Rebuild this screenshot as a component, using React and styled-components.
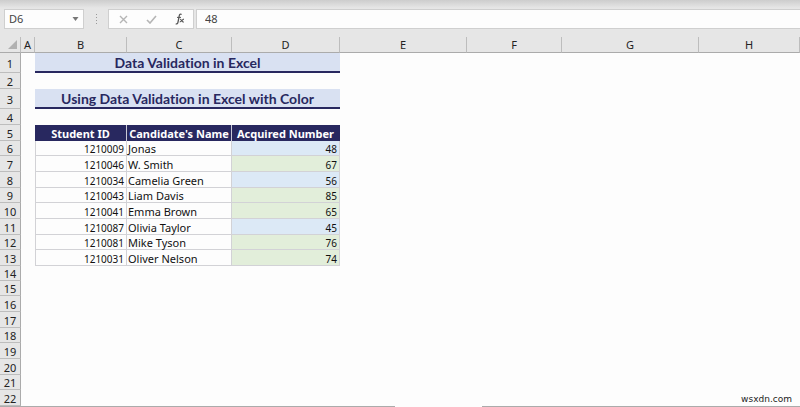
import React from "react";
import styled, { createGlobalStyle } from "styled-components";

const columns = [
  { name: "A", width: 14 },
  { name: "B", width: 92 },
  { name: "C", width: 105 },
  { name: "D", width: 108 },
  { name: "E", width: 127 },
  { name: "F", width: 95 },
  { name: "G", width: 137 },
  { name: "H" }
];

const students = [
  { id: 1210009, name: "Jonas", score: 48 },
  { id: 1210046, name: "W. Smith", score: 67 },
  { id: 1210034, name: "Camelia Green", score: 56 },
  { id: 1210043, name: "Liam Davis", score: 85 },
  { id: 1210041, name: "Emma Brown", score: 65 },
  { id: 1210087, name: "Olivia Taylor", score: 45 },
  { id: 1210081, name: "Mike Tyson", score: 76 },
  { id: 1210031, name: "Oliver Nelson", score: 74 }
];

const FIRST_STUDENT_ROW = 6;
const LAST_ROW = 22;
const PASS_MARK = 60;

const titles = {
  1: "Data Validation in Excel",
  3: "Using Data Validation in Excel with Color"
};

const shortRows = [6, 9, 12, 14, 15, 18, 21];

class App extends React.Component {
  constructor(props) {
    super(props);
    this.state = {
      cell: "D6",
      formula: "48"
    };
  }

  handleInputChange = event => {
    this.setState({ [event.target.name]: event.target.value });
  };

  renderCells(row) {
    if (titles[row]) {
      return <TitleCell colSpan={3}>{titles[row]}</TitleCell>;
    }
    if (row === FIRST_STUDENT_ROW - 1) {
      return (
        <>
          <HeadCell>Student ID</HeadCell>
          <HeadCell>Candidate's Name</HeadCell>
          <HeadCell $last>Acquired Number</HeadCell>
        </>
      );
    }
    const student = students[row - FIRST_STUDENT_ROW];
    if (student) {
      return (
        <>
          <NumberCell $first>{student.id}</NumberCell>
          <DataCell>{student.name}</DataCell>
          <NumberCell $fill={student.score >= PASS_MARK ? "#e2eeda" : "#dce9f6"}>
            {student.score}
          </NumberCell>
        </>
      );
    }
    return <EmptyCell colSpan={3} />;
  }

  render() {
    const rows = Array.from({ length: LAST_ROW }, (_, i) => i + 1);

    return (
      <Page>
        <GlobalStyle />
        <FormulaBar>
          <NameBox>
            <BarInput
              type="text"
              name="cell"
              aria-label="Name box"
              value={this.state.cell}
              onChange={this.handleInputChange}
            />
            <IconButton aria-label="Open name list">
              <svg width="7" height="4" viewBox="0 0 7 4">
                <path d="M0.5 0h6l-3 4z" fill="#777" />
              </svg>
            </IconButton>
          </NameBox>
          <Grip>
            <svg width="3" height="10" viewBox="0 0 3 10" fill="#999">
              <path d="M1 0h1v1h-1zM1 3h1v1h-1zM1 6h1v1h-1zM1 9h1v1h-1z" />
            </svg>
          </Grip>
          <Actions>
            <IconButton aria-label="Cancel">
              <svg width="9" height="9" viewBox="0 0 9 9">
                <path d="M1 1l7 7M8 1l-7 7" stroke="#b5b5b5" strokeWidth="1.4" />
              </svg>
            </IconButton>
            <IconButton aria-label="Enter">
              <svg width="11" height="9" viewBox="0 0 11 9">
                <path d="M1 5l3 3l6-7" fill="none" stroke="#b5b5b5" strokeWidth="1.6" />
              </svg>
            </IconButton>
            <IconButton aria-label="Insert function">
              <svg width="10" height="12" viewBox="0 0 10 12" fill="none" stroke="#555">
                <path d="M6.6 1.6C5.4 0.5 4.5 1.3 4.2 3L3 9.2C2.7 10.9 1.8 11.3 0.7 10.7" strokeWidth="1.3" />
                <path d="M2 4.4h4" strokeWidth="1" />
                <path d="M5 6.2c1.6-0.4 1.7 3.4 3.9 2.8M8.9 6.1C7.4 6.3 6.4 9 4.7 9" strokeWidth="1.1" />
              </svg>
            </IconButton>
          </Actions>
          <FormulaBox>
            <BarInput
              type="text"
              name="formula"
              aria-label="Formula"
              value={this.state.formula}
              onChange={this.handleInputChange}
            />
          </FormulaBox>
        </FormulaBar>
        <Sheet>
          <colgroup>
            <Column $width={21} />
            {columns.map(column => (
              <Column key={column.name} $width={column.width} />
            ))}
          </colgroup>
          <thead>
            <tr>
              <Corner>
                <svg width="9" height="9" viewBox="0 0 9 9">
                  <path d="M9 0v9h-9z" fill="#b1b1b1" />
                </svg>
              </Corner>
              {columns.map(column => (
                <ColumnHead key={column.name} scope="col">{column.name}</ColumnHead>
              ))}
            </tr>
          </thead>
          <tbody>
            {rows.map(row => (
              <Row key={row} $height={titles[row] ? 20 : shortRows.includes(row) ? 15 : 16}>
                <RowHead scope="row">{row}</RowHead>
                <EmptyCell />
                {this.renderCells(row)}
                <EmptyCell colSpan={4} />
              </Row>
            ))}
          </tbody>
        </Sheet>
        <SheetEdge>
          <ActiveTab />
        </SheetEdge>
        <SiteName>wsxdn.com</SiteName>
      </Page>
    );
  }
}

const GlobalStyle = createGlobalStyle`
  * {
    box-sizing: border-box;
  }
  body {
    margin: 0;
    background: #fdfdfd;
    color: #222;
    font-family: "Noto Sans", "Open Sans", sans-serif;
    font-size: 11px;
    line-height: 12px;
  }
`;

const Page = styled.div`
  position: relative;
  overflow: hidden;
`;

const FormulaBar = styled.div`
  display: flex;
  height: 37px;
  padding: 9px 0 8px 4px;
  background: linear-gradient(#cdcdcd, #e6e6e6 8px);
`;

const BarBox = styled.div`
  display: flex;
  align-items: center;
  background: #fdfdfd;
  border: 1px solid #cfcfcf;
`;

const NameBox = styled(BarBox)`
  width: 80px;
  padding: 0 4px;
`;

const Grip = styled.div`
  display: flex;
  align-items: center;
  justify-content: center;
  width: 24px;
`;

const Actions = styled(BarBox)`
  width: 86px;
  margin-right: 2px;
  justify-content: space-between;
  padding: 0 8px 0 10px;
`;

const FormulaBox = styled(BarBox)`
  flex: 1;
  padding: 0 8px;
  border-right: none;
`;

const BarInput = styled.input`
  flex: 1;
  min-width: 0;
  padding: 0;
  border: none;
  outline: none;
  background: transparent;
  color: #444;
  font: inherit;
  line-height: 16px;
`;

const IconButton = styled.button`
  display: flex;
  padding: 0;
  border: none;
  background: none;
`;

const Sheet = styled.table`
  width: 100%;
  table-layout: fixed;
  border-collapse: separate;
  border-spacing: 0;
`;

const Column = styled.col`
  width: ${props => (props.$width ? `${props.$width}px` : "auto")};
`;

const HeadingCell = styled.th`
  padding: 0;
  background: #e6e6e6;
  font-weight: 400;
  text-align: center;
`;

const ColumnHead = styled(HeadingCell)`
  height: 16px;
  border-right: 1px solid #bdbdbd;
  border-bottom: 1px solid #ababab;
`;

const Corner = styled(ColumnHead)`
  padding-right: 3px;
  vertical-align: bottom;

  svg {
    display: block;
    margin: 0 0 3px auto;
  }
`;

const Row = styled.tr`
  height: ${props => props.$height}px;
`;

const RowHead = styled(HeadingCell)`
  padding-top: 2px;
  border-right: 1px solid #ababab;
  border-bottom: 1px solid #bdbdbd;
`;

const EmptyCell = styled.td`
  padding: 0;
`;

const TitleCell = styled.td`
  padding: 2px 0 0;
  background: #d9e1f2;
  border-bottom: 2px solid #28285f;
  color: #28285f;
  font-family: Lato, sans-serif;
  font-size: 14px;
  font-variant-ligatures: none;
  font-weight: 700;
  line-height: 16px;
  text-align: center;
`;

const HeadCell = styled.th`
  padding: 2px 0 0;
  background: #28285f;
  border-right: 1px solid ${props => (props.$last ? "#28285f" : "#c9c9d6")};
  color: #fff;
  font-weight: 700;
  text-align: center;
  white-space: nowrap;
`;

const DataCell = styled.td`
  padding: 2px 2px 0 1px;
  background: ${props => props.$fill || "transparent"};
  border-right: 1px solid #d2d2d6;
  border-bottom: 1px solid #d2d2d6;
  border-left: ${props => (props.$first ? "1px solid #d2d2d6" : "none")};
  color: #111;
  white-space: nowrap;
`;

const NumberCell = styled(DataCell)`
  font-size: 10px;
  text-align: right;
`;

const SheetEdge = styled.div`
  display: flex;
  justify-content: center;
  height: 1px;
  padding-left: 77px;
  background: #ababab;
`;

const ActiveTab = styled.div`
  width: 87px;
  background: #fdfdfd;
`;

const SiteName = styled.span`
  position: absolute;
  right: 8px;
  bottom: 2px;
  font-family: "DejaVu Sans", sans-serif;
  font-size: 9px;
`;

export default App;
